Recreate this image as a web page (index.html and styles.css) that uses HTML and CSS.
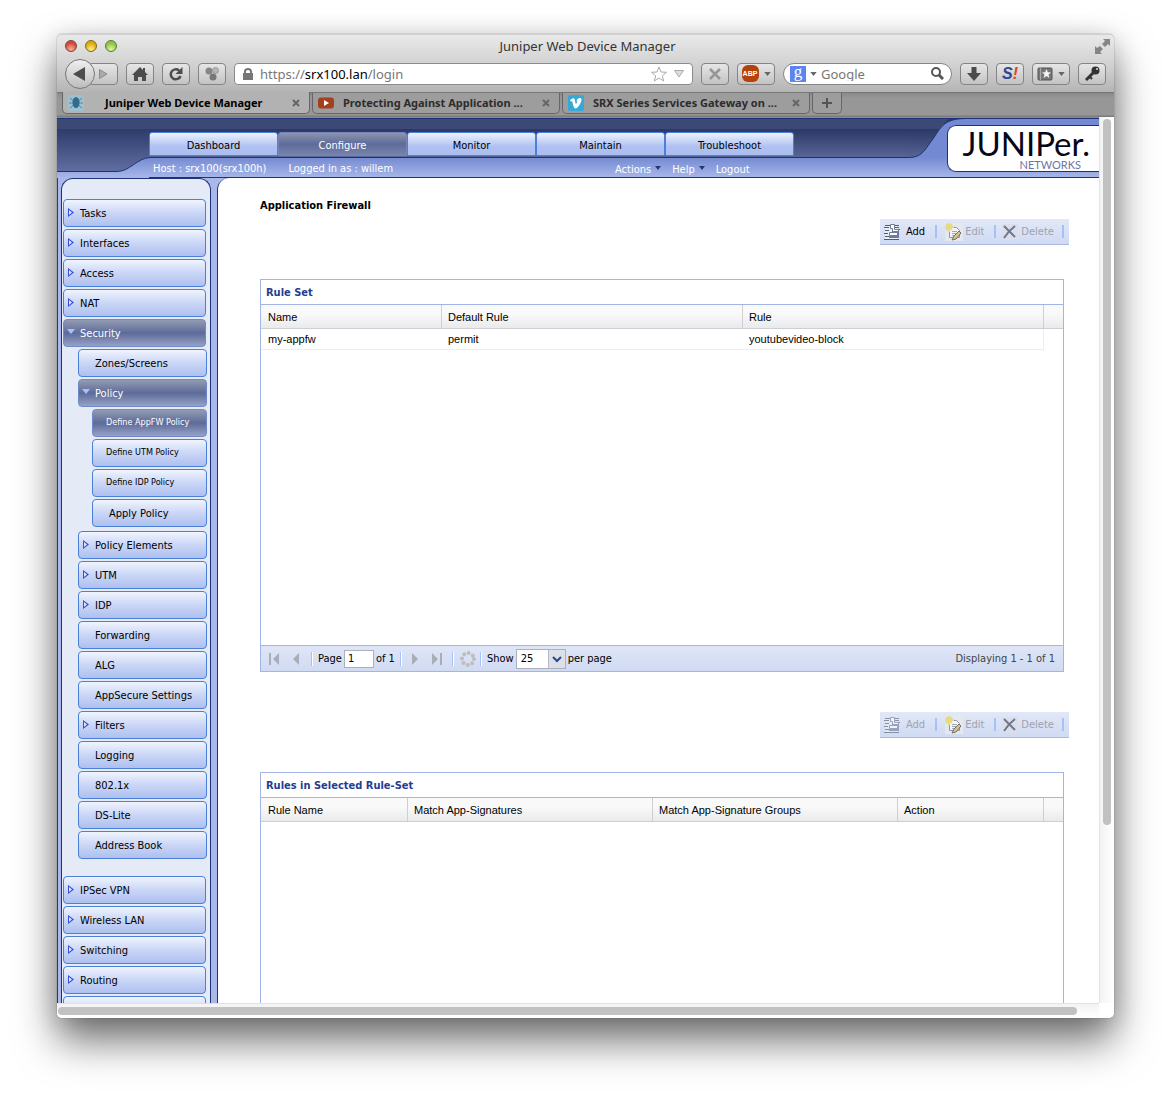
FILE: index.html
```html
<!DOCTYPE html>
<html lang="en">
<head>
<meta charset="utf-8">
<title>Juniper Web Device Manager</title>
<link rel="stylesheet" href="styles.css">
</head>
<body>
<svg class="symbols" aria-hidden="true">
  <symbol id="add" viewBox="0 0 16 16">
    <path fill="#e9edf6" d="M1 1h13v14H1z"/>
    <path stroke="#555c70" d="M1 1.500h6M0 3.500h5M1 6.500h4M0 9.500h4M1 12.500h4M0 15.500h15M11 1.500h4M11 3.500h4M12 5.500h4M12 9.500h3"/>
    <path fill="#fff" stroke="#747c91" d="M6.500.500h4v5h4v6h-9v-3h3v-4h-2z"/>
    <path fill="none" stroke="#6d7ba0" stroke-width="2" d="M5 13h9V8H8"/>
  </symbol>
  <symbol id="edit" viewBox="0 0 18 18">
    <path fill="#e6e8f0" d="M0 0h18v18H0z"/>
    <path fill="#f4f5f9" stroke="#8c95aa" d="M4.500 4.500h7l3 3v7h-10z"/>
    <path stroke="#a0a7b8" d="M7 8.500h5M7 10.500h5M7 12.500h4"/>
    <path stroke="#e3db84" stroke-width="2" d="M4 0v9M0 4h9M1 1l6 6M7 1L1 7"/>
    <path fill="#d4c391" stroke="#77715f" d="M14 8l2 2-5 6-4 1 2-4z"/>
  </symbol>
  <symbol id="delete" viewBox="0 0 16 16">
    <path fill="#dadfec" d="M0 0h16v16H0z"/>
    <path fill="none" stroke="#70778b" stroke-width="2" d="M2 2l11 11M13 2C9 5 6 8 2 14"/>
  </symbol>
  <symbol id="close" viewBox="0 0 8 8"><path fill="none" stroke="#656565" stroke-width="2" d="M1 1l6 6M7 1L1 7"/></symbol>
  <symbol id="down" viewBox="0 0 8 5"><path fill="#666" d="M0 0h8L4 5z"/></symbol>
</svg>

<div class="window">
  <header class="chrome">
    <div class="titlebar">
      <div class="lights"><i class="red"></i><i class="yellow"></i><i class="green"></i></div>
      <div class="title">Juniper Web Device Manager</div>
      <svg class="fullscreen" viewBox="0 0 15 15"><path fill="#858585" d="M8 0h7v7l-2-2-3 3-3-3 3-3zM0 7l2 2 3-2 3 3-3 3 2 2H0z"/><path stroke="#ddd" stroke-width="2" d="M4 4l7 7"/></svg>
    </div>
    <div class="toolbar">
      <div class="history">
        <button class="back" aria-label="Back"><svg width="12" height="14" viewBox="0 0 12 14"><path fill="#4c4c4c" d="M12 0v14L0 7z"/></svg></button>
        <button class="tool forward" aria-label="Forward"><svg width="9" height="10" viewBox="0 0 9 10"><path fill="#aaa" stroke="#8b8b8b" d="M.500.500v9L8 5z"/></svg></button>
      </div>
      <button class="tool" aria-label="Home"><svg width="16" height="14" viewBox="0 0 16 14"><path fill="#4c4c4c" d="M8 0l3 3V1h2v4l3 3h-2v6h-4v-4H6v4H2V8H0z"/></svg></button>
      <button class="tool" aria-label="Reload"><svg width="14" height="14" viewBox="0 0 14 14"><path fill="none" stroke="#4c4c4c" stroke-width="2.500" d="M10 3.500A5 5 0 1 0 11.500 9"/><path fill="#4c4c4c" d="M13.500 0v7h-7z"/></svg></button>
      <button class="tool" aria-label="Groups"><svg width="14" height="14" viewBox="0 0 14 14"><circle cx="4" cy="4" r="3.500" fill="#858585"/><circle cx="10.500" cy="3.500" r="3" fill="#b5b5b5" stroke="#999"/><circle cx="8" cy="10" r="3.500" fill="#777"/></svg></button>
      <div class="address">
        <svg width="10" height="12" viewBox="0 0 10 12"><path fill="none" stroke="#777" stroke-width="2" d="M2 6V3.500a3 2.500 0 0 1 6 0V6"/><path fill="#777" d="M0 5h10v7H0z"/></svg>
        <span class="url">https://<b>srx100.lan</b>/login</span>
        <svg width="16" height="16" viewBox="0 0 16 16"><path fill="#fff" stroke="#aaa" d="M8 1l2 5 5.500.300-4.200 3.500L12.700 15 8 12l-4.700 3 1.400-5.200L.500 6.300 6 6z"/></svg>
        <svg width="10" height="8" viewBox="0 0 10 8"><path fill="#ddd" stroke="#aaa" d="M.500.500h9L5 7z"/></svg>
      </div>
      <button class="tool" aria-label="Stop"><svg width="12" height="12" viewBox="0 0 12 12"><path stroke="#969696" stroke-width="2.500" d="M1 1l10 10M11 1L1 11"/></svg></button>
      <button class="tool wide" aria-label="Adblock"><span class="abp">ABP</span><svg width="7" height="4"><use href="#down"/></svg></button>
      <div class="search">
        <span class="g">g</span><svg width="7" height="4"><use href="#down"/></svg>
        <input type="text" aria-label="Search" placeholder="Google">
        <svg width="13" height="13" viewBox="0 0 13 13"><circle cx="5" cy="5" r="4" fill="none" stroke="#555" stroke-width="2"/><path stroke="#555" stroke-width="3" d="M8 8l4 4"/></svg>
      </div>
      <button class="tool" aria-label="Downloads"><svg width="14" height="14" viewBox="0 0 14 14"><path fill="#4c4c4c" d="M4.500 0h5v6H14l-7 8-7-8h4.500z"/></svg></button>
      <button class="tool" aria-label="Stylish"><span class="stylish">S<em>!</em></span></button>
      <button class="tool wide" aria-label="Bookmarks"><svg width="16" height="14" viewBox="0 0 16 14"><rect x="1" y="1" width="14" height="12" rx="1" fill="#777" stroke="#555"/><path d="M3.500 1v12" stroke="#aaa"/><path fill="#f4f4f4" d="M9.500 2l1.300 3.200 3.200.200-2.500 2 .900 3.500-2.900-2-2.900 2 .900-3.500-2.500-2 3.200-.200z"/></svg><svg width="7" height="4"><use href="#down"/></svg></button>
      <button class="tool" aria-label="Passwords"><svg width="15" height="15" viewBox="0 0 15 15"><path stroke="#333" stroke-width="3" d="M9 6l-8 8"/><path stroke="#333" stroke-width="2" d="M4 10l3 3"/><circle cx="10.500" cy="4.500" r="4" fill="#333"/><circle cx="12" cy="3" r="1" fill="#ddd"/></svg></button>
    </div>
    <nav class="tabs">
      <div class="tab active">
        <svg width="16" height="16" viewBox="0 0 16 16"><rect width="16" height="16" rx="3" fill="#9fc0ce"/><path stroke="#5589a5" d="M2 3l12 10M14 3L2 13M1 8h14"/><ellipse cx="8" cy="7.500" rx="3.500" ry="5.500" fill="#326b8b"/></svg>
        <span>Juniper Web Device Manager</span><svg width="8" height="8"><use href="#close"/></svg>
      </div>
      <div class="tab">
        <svg width="16" height="16" viewBox="0 0 16 16"><rect y="2.500" width="16" height="11" rx="3" fill="#a63f1c"/><path fill="#fff" d="M6 5l5 3-5 3z"/></svg>
        <span>Protecting Against Application ...</span><svg width="8" height="8"><use href="#close"/></svg>
      </div>
      <div class="tab">
        <svg width="16" height="16" viewBox="0 0 16 16"><rect width="16" height="16" rx="2" fill="#35a9d3"/><path fill="#fff" d="M2 5.500C3.500 4 6 2 6.700 4.500l1 4.500C9 8 10 6.500 8.500 6 9 3 13 2 13.500 4.500 13.500 8 10 12.500 8 13.500c-3 .500-3-6-4-7.500L2.700 6.500z"/></svg>
        <span>SRX Series Services Gateway on ...</span><svg width="8" height="8"><use href="#close"/></svg>
      </div>
      <button class="newtab" aria-label="New tab"><svg width="10" height="10" viewBox="0 0 10 10"><path stroke="#555" stroke-width="2" d="M5 0v10M0 5h10"/></svg></button>
    </nav>
  </header>

  <div class="viewport">
    <div class="page">
      <div class="masthead">
        <svg class="notch" viewBox="0 0 92 61">
          <defs><linearGradient id="navy" gradientUnits="userSpaceOnUse" x1="0" y1="12" x2="0" y2="54"><stop offset="0" stop-color="#2e3c6c"/><stop offset="1" stop-color="#5f6da0"/></linearGradient></defs>
          <path fill="url(#navy)" stroke="#1f3278" d="M-1 1.500H93V40.500C80 41 73 54.500 60 54.500H-1z"/>
          <path fill="#3c4974" d="M0 2h92v10H0z"/>
        </svg>
        <div class="mid">
          <nav class="sections">
            <a href="#">Dashboard</a><a href="#" class="on">Configure</a><a href="#">Monitor</a><a href="#">Maintain</a><a href="#">Troubleshoot</a>
          </nav>
          <div class="info">
            <span>Host : srx100(srx100h)</span><span class="who">Logged in as : willem</span>
            <nav class="links"><a href="#">Actions<i></i></a><a href="#">Help<i></i></a><a href="#">Logout</a></nav>
          </div>
        </div>
        <div class="brand">
          <svg class="swoosh" viewBox="0 0 60 60">
            <defs><linearGradient id="navy2" gradientUnits="userSpaceOnUse" x1="0" y1="12" x2="0" y2="41"><stop offset="0" stop-color="#2b3867"/><stop offset="1" stop-color="#586695"/></linearGradient></defs>
            <path fill="url(#navy2)" stroke="#1f3278" d="M-1 1.500H60C36 2 36 12 25 26 20 33 16 40.500 4 40.500H-1z"/>
            <path fill="#3c4974" d="M0 2h44q-4 3-9 10H0z"/>
          </svg>
          <div class="logo"><span class="wordmark">JUNIPer.</span><span class="networks">NETWORKS</span></div>
        </div>
      </div>

      <div class="body">
        <nav class="side">
          <ul>
            <li><a href="#" class="more">Tasks</a></li>
            <li><a href="#" class="more">Interfaces</a></li>
            <li><a href="#" class="more">Access</a></li>
            <li><a href="#" class="more">NAT</a></li>
            <li><a href="#" class="open">Security</a>
              <ul class="sub">
                <li><a href="#">Zones/Screens</a></li>
                <li><a href="#" class="open">Policy</a>
                  <ul class="leaf">
                    <li><a href="#" class="small on">Define AppFW Policy</a></li>
                    <li><a href="#" class="small">Define UTM Policy</a></li>
                    <li><a href="#" class="small">Define IDP Policy</a></li>
                    <li><a href="#">Apply Policy</a></li>
                  </ul>
                </li>
                <li><a href="#" class="more">Policy Elements</a></li>
                <li><a href="#" class="more">UTM</a></li>
                <li><a href="#" class="more">IDP</a></li>
                <li><a href="#">Forwarding</a></li>
                <li><a href="#">ALG</a></li>
                <li><a href="#">AppSecure Settings</a></li>
                <li><a href="#" class="more">Filters</a></li>
                <li><a href="#">Logging</a></li>
                <li><a href="#">802.1x</a></li>
                <li><a href="#">DS-Lite</a></li>
                <li><a href="#">Address Book</a></li>
              </ul>
            </li>
            <li><a href="#" class="more">IPSec VPN</a></li>
            <li><a href="#" class="more">Wireless LAN</a></li>
            <li><a href="#" class="more">Switching</a></li>
            <li><a href="#" class="more">Routing</a></li>
            <li><a href="#" aria-label="More"></a></li>
          </ul>
        </nav>

        <main class="main">
          <h1>Application Firewall</h1>
          <div class="actions">
            <button><svg width="16" height="16"><use href="#add"/></svg>Add</button>
            <button disabled><svg width="18" height="18"><use href="#edit"/></svg>Edit</button>
            <button disabled><svg width="16" height="16"><use href="#delete"/></svg>Delete</button>
          </div>
          <section class="panel">
            <h2>Rule Set</h2>
            <div class="grid">
              <table>
                <colgroup><col class="c-name"><col><col><col class="c-fill"></colgroup>
                <thead><tr><th>Name</th><th>Default Rule</th><th>Rule</th><th></th></tr></thead>
                <tbody><tr><td>my-appfw</td><td>permit</td><td>youtubevideo-block</td></tr></tbody>
              </table>
            </div>
            <div class="pager">
              <button aria-label="First page"><svg width="12" height="12" viewBox="0 0 12 12"><path fill="#a9adb8" d="M1 0h2v12H1zM11 0v12L5 6z"/></svg></button>
              <button aria-label="Previous page"><svg width="12" height="12" viewBox="0 0 12 12"><path fill="#a9adb8" d="M9 0v12L3 6z"/></svg></button>
              <i class="sep"></i>
              <label for="pageno">Page</label><input id="pageno" type="text" value="1"><span class="of">of 1</span>
              <i class="sep"></i>
              <button aria-label="Next page"><svg width="12" height="12" viewBox="0 0 12 12"><path fill="#a9adb8" d="M3 0v12l6-6z"/></svg></button>
              <button aria-label="Last page"><svg width="12" height="12" viewBox="0 0 12 12"><path fill="#a9adb8" d="M9 0h2v12H9zM1 0v12l6-6z"/></svg></button>
              <i class="sep"></i>
              <button class="refresh" aria-label="Refresh"><svg width="16" height="16" viewBox="0 0 16 16"><circle cx="8" cy="8" r="6" fill="none" stroke="#bfbdb8" stroke-width="4" stroke-linecap="round" stroke-dasharray="0 4.710"/></svg></button>
              <i class="sep"></i>
              <label for="size">Show</label>
              <span class="combo"><select id="size"><option>25</option></select><svg viewBox="0 0 17 18"><path fill="#dde0e8" d="M0 0h17v18H0z"/><path stroke="#b5b8c8" d="M.500 0v18"/><path fill="none" stroke="#2b4691" stroke-width="2" d="M5 7l4 4 4-4"/></svg></span>
              <span>per page</span>
              <span class="count">Displaying 1 - 1 of 1</span>
            </div>
          </section>

          <div class="actions second">
            <button disabled><svg width="16" height="16"><use href="#add"/></svg>Add</button>
            <button disabled><svg width="18" height="18"><use href="#edit"/></svg>Edit</button>
            <button disabled><svg width="16" height="16"><use href="#delete"/></svg>Delete</button>
          </div>
          <section class="panel">
            <h2>Rules in Selected Rule-Set</h2>
            <div class="grid">
              <table>
                <colgroup><col class="c-rule"><col><col><col class="c-action"><col class="c-fill"></colgroup>
                <thead><tr><th>Rule Name</th><th>Match App-Signatures</th><th>Match App-Signature Groups</th><th>Action</th><th></th></tr></thead>
              </table>
            </div>
          </section>
        </main>
      </div>
    </div>
    <div class="vbar"><i></i></div>
    <div class="hbar"><i></i></div>
  </div>
</div>
</body>
</html>
```

FILE: styles.css
```css
* { box-sizing: border-box; }
html, body { height: 100%; margin: 0; }
body {
  padding: 34px 57px 79px 57px;
  background: #fff;
  color: #000;
  font: 11px/14px "DejaVu Sans Condensed", "DejaVu Sans", sans-serif;
  overflow: hidden;
}
.symbols { display: none; }
svg { display: block; flex: none; }
button, input, select { font: inherit; color: inherit; margin: 0; padding: 0; }
button { border: 0; background: none; display: flex; align-items: center; justify-content: center; }
a { color: inherit; text-decoration: none; }
ul { list-style: none; margin: 0; padding: 0; }
h1, h2 { margin: 0; font-size: 11px; }

.window {
  height: 100%;
  display: flex;
  flex-direction: column;
  border-radius: 5px;
  overflow: hidden;
  box-shadow: 0 0 1px #333, 0 3px 24px rgba(0, 0, 0, .15), 0 23px 42px rgba(0, 0, 0, .55);
}

/* Browser frame */
.chrome {
  background: linear-gradient(#e9e9e9, #cdcdcd 35px, #b2b2b2 59px);
  border-top: 1px solid #d0d0d0;
  font-family: "Noto Sans", sans-serif;
}
.titlebar { display: flex; align-items: center; height: 22px; padding: 0 4px 0 8px; }
.lights { display: flex; gap: 8px; width: 60px; }
.lights i { width: 12px; height: 12px; border-radius: 50%; border: 1px solid #73433d; background: radial-gradient(circle at 50% 85%, #f9b39b, #d24a35 65%); }
.lights .yellow { border-color: #80681c; background: radial-gradient(circle at 50% 85%, #fdf08c, #dca90e 65%); }
.lights .green { border-color: #5a7b31; background: radial-gradient(circle at 50% 85%, #e2f6a6, #8fc145 65%); }
.title { flex: 1; text-align: center; font-size: 13px; color: #333; }
.fullscreen { width: 15px; height: 15px; margin-left: 45px; }
.toolbar { display: flex; align-items: center; gap: 8px; height: 35px; padding: 0 8px 2px; }
.history { display: flex; align-items: center; }
.tool {
  width: 28px; height: 22px; flex: none;
  border: 1px solid #848484; border-radius: 4px;
  background: linear-gradient(#e6e6e6, #c3c3c3);
}
.tool.wide { width: 38px; gap: 5px; }
.back { width: 30px; height: 30px; border: 1px solid #777; border-radius: 50%; background: linear-gradient(#efefef, #bdbdbd); z-index: 1; padding-right: 2px; }
.forward { margin-left: -7px; width: 30px; }
.address {
  flex: 1; display: flex; align-items: center; height: 22px; gap: 7px; padding: 0 8px;
  background: #fff; border: 1px solid #8b8b8b; border-radius: 4px; font-size: 13px; color: #777;
}
.url { flex: 1; }
.url b { color: #000; font-weight: 400; }
.abp { width: 17px; height: 17px; border-radius: 6px; background: #b5420c; color: #fff; font: bold 7px/17px "Liberation Sans", sans-serif; text-align: center; }
.search { display: flex; align-items: center; gap: 4px; width: 169px; height: 22px; padding: 0 7px 0 6px; border: 1px solid #858585; border-radius: 11px; background: #fff; }
.search input { flex: 1; min-width: 0; border: 0; outline: 0; background: none; font-size: 13px; }
.search input::placeholder { color: #777; opacity: 1; }
.g { width: 16px; height: 16px; background: #5c85f2; color: #fff; font: 17px/12px "Liberation Serif", serif; text-align: center; }
.stylish { font: bold italic 16px/16px "Liberation Sans", sans-serif; color: #2d4799; }
.stylish em { color: #e0431b; }
.tabs { display: flex; gap: 2px; height: 25px; padding: 0 5px 2px; background: linear-gradient(#898989, #979797 5px, #979797 22px, #7c7c7c); border-top: 1px solid #777; border-bottom: 1px solid #7d7d7d; }
.tab {
  display: flex; align-items: center; width: 248px; height: 21px; padding: 0 9px 0 5px;
  background: #9d9d9d; border: solid #666; border-width: 0 1px 1px; border-radius: 0 0 5px 5px;
  font-weight: 700; font-size: 11px; color: #2c2c2c;
}
.tab.active { background: #b2b2b2; margin-top: -1px; height: 22px; color: #000; }
.tab span { flex: 1; padding-left: 9px; white-space: nowrap; }
.tab.active span { padding-left: 21px; }
.newtab { width: 30px; height: 21px; background: #9d9d9d; border: solid #666; border-width: 0 1px 1px; border-radius: 0 0 5px 5px; }

/* Scrolled area with its two bars */
.viewport { flex: 1; min-height: 0; display: grid; grid-template: minmax(0, 1fr) 15px / minmax(0, 1fr) 15px; background: #fff; }
.page { display: flex; flex-direction: column; overflow: hidden; }
.vbar { border-left: 1px solid #e4e4e4; background: linear-gradient(90deg, #f3f3f3, #fff); padding: 2px 3px; }
.vbar i { display: block; width: 8px; height: 80%; border-radius: 4px; background: #c1c1c1; }
.hbar { border-top: 1px solid #e2e2e2; background: linear-gradient(#f3f3f3, #fff); padding: 3px 1px; }
.hbar i { display: block; width: 98%; height: 8px; border-radius: 4px; background: #c1c1c1; }

/* Masthead */
.masthead { flex: none; display: flex; height: 61px; background: linear-gradient(#7389d1 0, #7389d1 40px, #a9b8ea); }
.notch { width: 92px; height: 61px; }
.mid { flex: 1; min-width: 0; padding-top: 1px; }
.sections { display: flex; height: 40px; padding-top: 13px; border: solid #1f3278; border-width: 1px 0; background: linear-gradient(#3c4974 10px, #2b3867 10px, #586695); }
.sections a {
  width: 129px; height: 24px; line-height: 25px; text-align: center;
  border: 1px solid #4a80d8; border-radius: 3px 3px 0 0;
  background: linear-gradient(#edf2fd, #b0c2f2 60%, #abbef1);
}
.sections .on { color: #fff; background: linear-gradient(#8d95ac, #5d6b99 50%, #7684ac); border-color: #7585bb; }
.info { display: flex; height: 20px; line-height: 22px; padding-left: 4px; color: #fff; border-bottom: 1px solid #1f3278; white-space: nowrap; }
.who { margin-left: 22px; }
.links { display: flex; gap: 11px; margin: 1px 0 0 222px; }
.links i { display: inline-block; margin: 0 0 3px 4px; border: solid transparent; border-width: 4px 3px 0; border-top-color: #24367b; }
.brand { display: flex; width: 194px; border-bottom: 1px solid #1f3278; background: linear-gradient(#1f3278, #1f3278) 0 1px / 100% 1px no-repeat; }
.swoosh { width: 60px; height: 60px; margin-right: -18px; }
.logo {
  flex: 1; display: flex; flex-direction: column; align-items: flex-end; height: 47px; margin-top: 8px; padding-right: 9px;
  background: #fff; border: 1px solid #1f3278; border-right: 0; border-radius: 9px 0 0 9px; font-family: Lato, sans-serif;
}
.wordmark { font-size: 33px; line-height: 34px; font-weight: 400; color: #060618; }
.networks { font-size: 11px; line-height: 9px; color: #6a76a5; padding-right: 9px; }

/* Body columns */
.body { flex: 1; min-height: 0; display: flex; background: #a9b8e8; border-left: 1px solid #24388a; }
.side { flex: none; width: 150px; margin: 0 6px 0 3px; padding: 20px 0 0 1px; background: #e4ebf7; border: solid #1f3278; border-width: 1px 1px 0; border-radius: 12px 12px 0 0; }
.side ul { display: flex; flex-direction: column; gap: 2px; }
.side a {
  display: block; position: relative; width: 143px; height: 28px; padding-left: 16px; line-height: 27px;
  border: 1px solid #4a80d8; border-radius: 4px; background: linear-gradient(#f0f4fd, #cad6f6 50%, #aec0f0);
}
.side .sub { margin: 2px 0 15px 15px; }
.side .sub a { width: 129px; }
.side .leaf { margin: 2px 0 2px 14px; }
.side .leaf a { width: 115px; }
.side .leaf .small { font-size: 9px; line-height: 25px; padding-left: 13px; }
.side .open, .side .leaf .on { color: #fff; background: linear-gradient(#939bb2, #5d6b99 50%, #96a1c5); border-color: #6f89c9; }
.more::before, .open::before { content: ""; position: absolute; left: 4px; top: 8px; width: 6px; height: 9px; background: #3350da; clip-path: polygon(0 0, 100% 50%, 0 100%); }
.more::after { content: ""; position: absolute; left: 5px; top: 10px; width: 3px; height: 5px; background: #dfe8fc; clip-path: polygon(0 0, 100% 50%, 0 100%); }
.open::before { width: 8px; height: 5px; top: 9px; left: 3px; background: #a9c0ff; clip-path: polygon(0 0, 100% 0, 50% 100%); }
.main {
  flex: 1; min-width: 0; display: flex; flex-direction: column; padding: 21px 35px 0 42px;
  background: #fff; border-left: 1px solid #1f3278; border-radius: 12px 0 0 0;
}
.main > * { flex: none; }
.actions { align-self: flex-end; display: flex; align-items: center; width: 189px; height: 26px; margin: 6px -5px 34px 0; padding-left: 4px; background: linear-gradient(#e1e8f7, #d0daf2); border-bottom: 1px solid #aab9dd; }
.actions button { gap: 6px; height: 13px; margin-right: 8px; padding-right: 10px; border-right: 2px solid #a5c2f7; }
.actions button + button { gap: 2px; padding-right: 10px; margin-right: 6px; }
.actions button:last-child { gap: 3px; padding-right: 8px; margin-right: 0; }
.actions :disabled { color: #9ea3ad; }
.actions.second { margin-top: 40px; }
.actions.second button:first-child svg { opacity: .6; }
.panel { border: 1px solid #a3b5e6; }
.panel h2 { padding: 0 5px; height: 24px; line-height: 26px; color: #243d91; }
.grid { height: 341px; border-top: 1px solid #a3b5e6; font-family: "Liberation Sans", sans-serif; }
table { width: 100%; table-layout: fixed; border-collapse: separate; border-spacing: 0; }
.c-name { width: 181px; }
.c-rule { width: 147px; }
.c-action { width: 146px; }
.c-fill { width: 19px; }
th { height: 24px; padding: 0 6px; font-weight: 400; text-align: left; background: linear-gradient(#f9f9f9 40%, #e9eaec); border-bottom: 1px solid #cfcfcf; border-right: 1px solid #cfcfcf; }
th:last-child { border-right: 0; }
td { height: 21px; padding: 0 6px; border-bottom: 1px solid #ededed; }
th:first-child, td:first-child { padding-left: 7px; }
td:last-child { border-right: 1px solid #ededed; }
.pager { display: flex; align-items: center; height: 26px; padding: 0 8px 0 6px; background: linear-gradient(#dfe6f7, #d0daf2); border-top: 1px solid #a3b5e6; white-space: nowrap; }
.pager button { width: 14px; margin-right: 8px; }
.pager .refresh { width: 16px; margin: 0 4px 0 1px; }
.sep { width: 2px; height: 14px; margin: 0 5px 0 0; background: linear-gradient(90deg, #a5c2f7 50%, #fff 50%); }
.pager input { width: 30px; height: 18px; margin-left: 2px; padding: 0 3px; border: 1px solid #aab0bd; background: #fff; }
.of { margin: 0 5px 0 2px; }
.of + .sep { margin-right: 6px; }
.combo { display: flex; position: relative; margin: 0 2px; }
.combo select { width: 50px; height: 20px; padding: 0 4px; appearance: none; border: 1px solid #aab0bd; border-radius: 0; background: #fff; }
.combo svg { position: absolute; right: 1px; top: 1px; width: 17px; height: 18px; pointer-events: none; }
.count { margin-left: auto; color: #444; }
```
